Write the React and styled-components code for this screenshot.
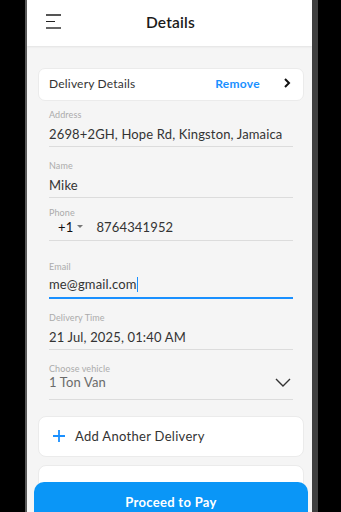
import React from "react";
import styled, { createGlobalStyle } from "styled-components";

const Global = createGlobalStyle`
  html, body { margin: 0; padding: 0; background: #000; }
  body { font-family: "Lato", "Noto Sans", sans-serif; }
`;

const Screen = styled.div`
  width: 341px;
  height: 512px;
  background: #000;
  display: flex;
  padding-left: 25px;
  box-sizing: border-box;
`;

const Phone = styled.div`
  position: relative;
  width: 285px;
  height: 512px;
  border-left: 2px solid #5a5a5a;
  border-right: 6px solid #3f3f3f;
  background: #f5f5f5;
  overflow: hidden;
  display: flex;
  flex-direction: column;
`;

const Header = styled.div`
  height: 46px;
  background: #fff;
  box-shadow: 0 1px 2px rgba(0, 0, 0, 0.08);
  display: flex;
  align-items: center;
  position: relative;
  justify-content: center;
  flex-shrink: 0;
`;

const Burger = styled.div`
  position: absolute;
  left: 19px;
  top: 14px;
  width: 15px;
  display: flex;
  flex-direction: column;
  gap: 5px;
`;

const Bar = styled.span`
  display: block;
  height: 1.5px;
  width: ${(p) => p.$w}px;
  background: ${(p) => p.$c};
`;

const Title = styled.div`
  font-size: 15.5px;
  font-weight: 600;
  letter-spacing: 0.2px;
  color: #1a1a1a;
  margin: 0 0 2px 2px;
`;

const Body = styled.div`
  padding: 22px 8px 0 11px;
  display: flex;
  flex-direction: column;
`;

const Card = styled.div`
  background: #fff;
  border: 1px solid #ebebeb;
  border-radius: ${(p) => p.$r || 7}px;
  height: ${(p) => p.$h}px;
  box-sizing: border-box;
  display: flex;
  align-items: center;
  padding: 0 12px ${(p) => p.$pb || 1}px ${(p) => p.$pl || 10}px;
  flex-shrink: 0;
`;

const CardLabel = styled.span`
  font-size: 12px;
  letter-spacing: 0.2px;
  color: #333;
  flex: 1;
`;

const RemoveLink = styled.span`
  font-size: 12px;
  font-weight: 700;
  letter-spacing: 0.3px;
  color: #1a90ff;
  margin-right: 23px;
`;

const Fields = styled.div`
  padding: 0 11px 0 11px;
  display: flex;
  flex-direction: column;
`;

const Field = styled.div`
  border-bottom: ${(p) => (p.$active ? "2px solid #1a90ff" : "1px solid #dcdcdc")};
  padding-top: ${(p) => p.$pt || 8}px;
  height: ${(p) => p.$h}px;
  box-sizing: border-box;
  display: flex;
  flex-direction: column;
`;

const Label = styled.div`
  font-size: 9px;
  color: #ababab;
  line-height: 11px;
  letter-spacing: 0.1px;
`;

const Value = styled.div`
  font-size: 13px;
  letter-spacing: 0.15px;
  white-space: nowrap;
  color: ${(p) => (p.$muted ? "#6a6a6a" : "#333")};
  line-height: 16px;
  margin-top: ${(p) => p.$mt ?? 6}px;
  display: flex;
  align-items: center;
`;

const Caret = styled.span`
  display: inline-block;
  width: 1px;
  height: 15px;
  background: #1a90ff;
`;

const Code = styled.span`
  color: #111;
  margin-left: 9px;
  display: flex;
  align-items: center;
  gap: 4px;
  margin-right: 13px;
`;

const SelectRow = styled.div`
  display: flex;
  align-items: center;
  justify-content: space-between;
`;

const AddText = styled.span`
  font-size: 13px;
  letter-spacing: 0.3px;
  color: #333;
  margin-left: 10px;
`;

const PayButton = styled.button`
  position: absolute;
  left: 7px;
  right: 4px;
  bottom: -20px;
  height: 50px;
  border: none;
  border-radius: 10px;
  background: #0a96f7;
  color: #fff;
  font-family: inherit;
  font-size: 13px;
  font-weight: 700;
  letter-spacing: 0.3px;
  padding: 0 0 10px;
`;

export default function App() {
  return (
    <Screen>
      <Global />
      <Phone>
        <Header>
          <Burger>
            <Bar $w={15} $c="#555" />
            <Bar $w={9} $c="#222" />
            <Bar $w={15} $c="#666" />
          </Burger>
          <Title>Details</Title>
        </Header>
        <Body>
          <Card $h={33} $pb={3}>
            <CardLabel>Delivery Details</CardLabel>
            <RemoveLink>Remove</RemoveLink>
            <svg width="8" height="10" viewBox="0 0 8 10">
              <path d="M2 1l4 4-4 4" fill="none" stroke="#111" strokeWidth="2" />
            </svg>
          </Card>
          <Fields>
            <Field $h={46} $pt={8}>
              <Label>Address</Label>
              <Value>2698+2GH, Hope Rd, Kingston, Jamaica</Value>
            </Field>
            <Field $h={51} $pt={13}>
              <Label>Name</Label>
              <Value>Mike</Value>
            </Field>
            <Field $h={43} $pt={9}>
              <Label>Phone</Label>
              <Value $mt={1}>
                <Code>
                  +1
                  <svg width="6" height="4" viewBox="0 0 6 4">
                    <path d="M0 0h6L3 3z" fill="#777" />
                  </svg>
                </Code>
                8764341952
              </Value>
            </Field>
            <Field $h={58} $active $pt={20}>
              <Label>Email</Label>
              <Value $mt={4}>
                me@gmail.com<Caret />
              </Value>
            </Field>
            <Field $h={51} $pt={13}>
              <Label>Delivery Time</Label>
              <Value>21 Jul, 2025, 01:40 AM</Value>
            </Field>
            <Field $h={50} $pt={13}>
              <Label>Choose vehicle</Label>
              <SelectRow>
                <Value $muted $mt={0}>1 Ton Van</Value>
                <svg width="16" height="9" viewBox="0 0 16 9" style={{ marginRight: 2 }}>
                  <path d="M1 1l7 7 7-7" fill="none" stroke="#333" strokeWidth="1.4" />
                </svg>
              </SelectRow>
            </Field>
          </Fields>
          <div style={{ height: 16 }} />
          <Card $h={41} $r={8} $pl={14}>
            <svg width="12" height="12" viewBox="0 0 12 12">
              <path d="M6 0v12M0 6h12" stroke="#1a90ff" strokeWidth="1.8" />
            </svg>
            <AddText>Add Another Delivery</AddText>
          </Card>
          <div style={{ height: 8 }} />
          <Card $h={40} $r={8} />
        </Body>
        <PayButton>Proceed to Pay</PayButton>
      </Phone>
    </Screen>
  );
}
